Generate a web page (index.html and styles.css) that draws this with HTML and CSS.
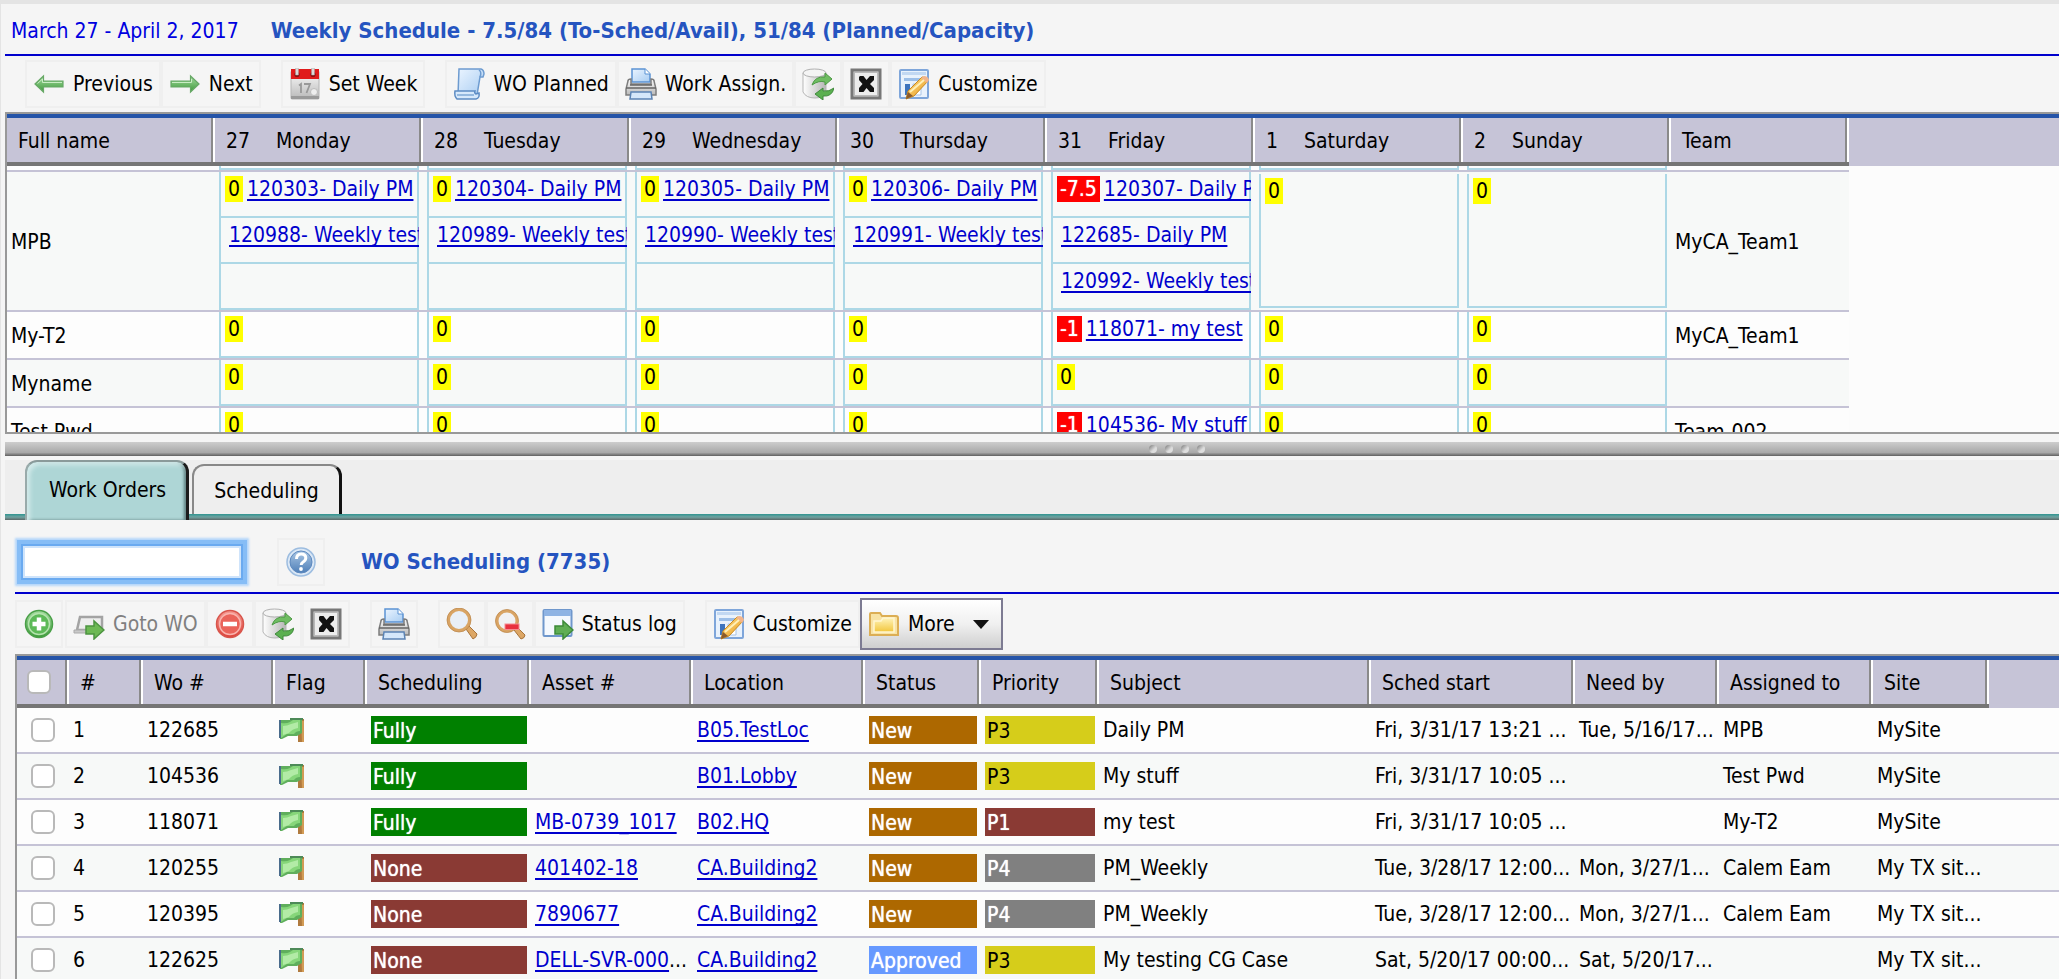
FILE: index.html
```html
<!DOCTYPE html>
<html lang="en">
<head>
<meta charset="utf-8">
<title>Weekly Schedule</title>
<link rel="stylesheet" href="styles.css">
</head>
<body>
<svg class="sprite" aria-hidden="true">
  <defs>
    <linearGradient id="gGreen" x1="0" y1="0" x2="0" y2="1"><stop offset="0" stop-color="#a5dba0"/><stop offset="1" stop-color="#3c9a3a"/></linearGradient>
    <linearGradient id="gBlue" x1="0" y1="0" x2="1" y2="1"><stop offset="0" stop-color="#eaf4ff"/><stop offset="1" stop-color="#a9cdf2"/></linearGradient>
    <linearGradient id="gGray" x1="0" y1="0" x2="0" y2="1"><stop offset="0" stop-color="#fafafa"/><stop offset="1" stop-color="#b9b9b9"/></linearGradient>
    <linearGradient id="gCyl" x1="0" y1="0" x2="1" y2="0"><stop offset="0" stop-color="#ffffff"/><stop offset="1" stop-color="#b5b5b5"/></linearGradient>
    <linearGradient id="gFold" x1="0" y1="0" x2="0" y2="1"><stop offset="0" stop-color="#fff3b8"/><stop offset="1" stop-color="#f2c63c"/></linearGradient>
    <linearGradient id="gHelp" x1="0" y1="0" x2="0" y2="1"><stop offset="0" stop-color="#a9c6e4"/><stop offset="1" stop-color="#4f7fb8"/></linearGradient>
    <linearGradient id="gRed" x1="0" y1="0" x2="0" y2="1"><stop offset="0" stop-color="#f59a92"/><stop offset="1" stop-color="#dc4038"/></linearGradient>
    <linearGradient id="gPencil" x1="0" y1="0" x2="1" y2="1"><stop offset="0" stop-color="#ffe08a"/><stop offset="1" stop-color="#e79a1c"/></linearGradient>
  </defs>
  <symbol id="i-prev" viewBox="0 0 32 32"><path d="M2 16 10.500 8v5H30v6H10.500v5z" fill="url(#gGreen)" stroke="#67a866" stroke-width="1.200"/><path d="M4.500 15.500 9.500 11v3.500H29" fill="none" stroke="#c9edc4" stroke-width="1"/></symbol>
  <symbol id="i-next" viewBox="0 0 32 32"><path d="M30 16 21.500 8v5H2v6h19.500v5z" fill="url(#gGreen)" stroke="#67a866" stroke-width="1.200"/><path d="M3 14.500h19.500V11" fill="none" stroke="#c9edc4" stroke-width="1"/></symbol>
  <symbol id="i-cal" viewBox="0 0 32 32"><rect x="2" y="3" width="28" height="28" rx="1" fill="url(#gGray)" stroke="#b5b5b5"/><rect x="2" y="1" width="28" height="10" fill="#e01b1b"/><path d="M2 28h28v3H2z" fill="#9a9a9a"/><circle cx="8" cy="6.500" r="2.600" fill="#8b1010"/><circle cx="24" cy="6.500" r="2.600" fill="#8b1010"/><path d="M6.600 0h2.800v7H6.600zM22.600 0h2.800v7h-2.800z" fill="#ddd" stroke="#aaa" stroke-width=".5"/><path d="M10 17.500l2-1.500v9M15 16h6l-3.500 9" fill="none" stroke="#999" stroke-width="1.800"/><circle cx="25" cy="24" r="3.500" fill="#eee" stroke="#bbb"/></symbol>
  <symbol id="i-scroll" viewBox="0 0 32 32"><path d="M6 1h22q3 1 3 5l-1 3h-3l-3 18H5z" fill="url(#gBlue)" stroke="#6d9bd0" stroke-width="1.500"/><path d="M26 2q3 2 1 7" fill="none" stroke="#6d9bd0" stroke-width="1.500"/><path d="M2 23h20q-1 2 1 3l3-1q1 5-3 6H4q-3-3-2-8z" fill="#d7e9fb" stroke="#5d8cc4" stroke-width="1.500"/><path d="M4 27h17" stroke="#7fa9d6" stroke-width="1.500"/></symbol>
  <symbol id="i-print" viewBox="0 0 32 32"><path d="M7 14V1h13l5 5v8z" fill="url(#gBlue)" stroke="#5b93d4" stroke-width="1.500"/><path d="M20 1v5h5" fill="#fff" stroke="#5b93d4"/><path d="M3 13q0-2 3-2v5h20v-5q3 0 3 2l2 8v6H1v-6z" fill="url(#gGray)" stroke="#7d7d7d" stroke-width="1.500"/><path d="M1 20h30M5 17h22" stroke="#666" stroke-width="1.500"/><path d="M6 24h20l1 7H5z" fill="#d5e7fa" stroke="#5b83b4" stroke-width="1.500"/></symbol>
  <symbol id="i-refresh" viewBox="0 0 32 32"><path d="M1 5v19q3 6 12 6 8 0 11-5V5z" fill="url(#gCyl)" stroke="#b5b5b5"/><ellipse cx="12.500" cy="5" rx="11.500" ry="4" fill="#f4f4f4" stroke="#b0b0b0"/><path d="M10 17q3-9 13-8V5l7 6-7 6v-3q-6-2-13 3z" fill="#6fbd62" stroke="#4d9a45"/><path d="M32 20q-2 9-11 8v4l-8-6 8-6v3q6 1 11-3z" fill="#5bb050" stroke="#3f8a3c"/></symbol>
  <symbol id="i-close" viewBox="0 0 32 32"><rect x="2" y="2" width="28" height="28" fill="#d9d9d9" stroke="#777" stroke-width="3"/><rect x="4.500" y="4.500" width="23" height="23" fill="#ececec" stroke="#b9b9b9"/><path d="M10 8h3.500l3 4 3.500-4H24v4l-4 4 4 4v4h-4l-3.500-4-3 4H9v-4l3.500-4L9 12V9z" fill="#111"/></symbol>
  <symbol id="i-custom" viewBox="0 0 32 32"><rect x="2" y="2" width="28" height="28" rx="1" fill="#e9f2fc" stroke="#7fa6da" stroke-width="2"/><path d="M4 4h24v3H4z" fill="#c2d8f2"/><path d="M6 10h20v3H6z" fill="#9dbfe8"/><path d="M7 16h5v11H7z" fill="#3e74bd"/><path d="M15 16h8v11h-8z" fill="#fff" stroke="#a9c4e6"/><path d="M8 31l2-8L24 9q3-1 6 4L16 28z" fill="url(#gPencil)" stroke="#c88a22"/><path d="M23 10l6 5 2-3q-1-4-5-4z" fill="#f2b58c"/><path d="M12 24 26 12" stroke="#fff0b8" stroke-width="2"/><path d="M8 31l2-7 5 4z" fill="#8a5a2c"/></symbol>
  <symbol id="i-help" viewBox="0 0 32 32"><circle cx="16" cy="16" r="14" fill="#dbe8f6" stroke="#9dbde0" stroke-width="1.500"/><circle cx="16" cy="16" r="11" fill="url(#gHelp)" stroke="#5d89bf"/><path d="M11.500 13q0-5 4.700-5 4.600 0 4.600 4 0 2.500-3 4.200-1.600 1-1.600 2.800" fill="none" stroke="#fff" stroke-width="3"/><circle cx="16" cy="23" r="1.900" fill="#fff"/></symbol>
  <symbol id="i-add" viewBox="0 0 32 32"><circle cx="16" cy="16" r="13.500" fill="url(#gGreen)" stroke="#4aa048" stroke-width="1.500"/><circle cx="16" cy="16" r="10.500" fill="#5dba58" stroke="#b4e3ad" stroke-width="1.500"/><path d="M16 9.500v13M9.500 16h13" stroke="#fff" stroke-width="4.500"/></symbol>
  <symbol id="i-goto" viewBox="0 0 32 32"><path d="M4 22 7 9h22v13z" fill="#eee" stroke="#a3a3a3" stroke-width="2.500"/><path d="M1 22h18v3H1z" fill="#c9c9c9" stroke="#aaa"/><path d="M13 18h8v-5l10 9-10 9v-5h-8z" fill="#6db954" stroke="#4c9440" stroke-width="1.500"/></symbol>
  <symbol id="i-del" viewBox="0 0 32 32"><circle cx="16" cy="16" r="13.500" fill="url(#gRed)" stroke="#d8554c" stroke-width="1.500"/><circle cx="16" cy="16" r="10.500" fill="#ea635a" stroke="#f9b3ad" stroke-width="1.500"/><path d="M9 16h14" stroke="#fff" stroke-width="4.500"/></symbol>
  <symbol id="i-zoom" viewBox="0 0 32 32"><path d="M20 21l3-3 8 8q0 3-4 5z" fill="#dda765" stroke="#a8743c"/><circle cx="13" cy="12" r="10.500" fill="#e9eff7" stroke="#d9a464" stroke-width="3"/><circle cx="13" cy="12" r="12" fill="none" stroke="#b98345" stroke-width=".7"/></symbol>
  <symbol id="i-zoomout" viewBox="0 0 32 32"><path d="M20 22l3-3 8 8q0 3-4 4z" fill="#dda765" stroke="#a8743c"/><circle cx="13" cy="13" r="10" fill="#f1f1f3" stroke="#d9a464" stroke-width="3"/><circle cx="13" cy="13" r="11.500" fill="none" stroke="#b98345" stroke-width=".7"/><rect x="11" y="16" width="14" height="5.500" fill="#e8313f" stroke="#f58a90"/></symbol>
  <symbol id="i-log" viewBox="0 0 32 32"><rect x="1.500" y="2" width="28" height="26" rx="1" fill="#f5f9fe" stroke="#6f97cc" stroke-width="2"/><path d="M2 2h27v6H2z" fill="#8fb4e4"/><path d="M13 18h8v-5l10 9-10 9v-5h-8z" fill="#5fae54" stroke="#3d8a3a" stroke-width="1.500"/></symbol>
  <symbol id="i-folder" viewBox="0 0 32 32"><path d="M2 27V6q0-1 1-1h9l2 3h14q2 0 2 2v17z" fill="#f8e3a4" stroke="#dcae54" stroke-width="2"/><path d="M6 24V13h7l2-3h11v14z" fill="url(#gFold)" stroke="#fff6cf" stroke-width="1.500"/></symbol>
  <symbol id="i-flag" viewBox="0 0 26 26"><path d="M19 2h6v23h-6z" fill="#b07a3e"/><path d="M22 4h3v21h-2z" fill="#d29b55"/><path d="M1 3h10V1h13l-1 3v12l-5 3h-9l-6 3H1z" fill="#5fae5c"/><path d="M2 6q5 1 9-1l3-2h7v11q-4 0-6 3H8l-6 4z" fill="#86d67a"/><path d="M4 9q4 0 8-2l7-2v6q-6 1-9 5l-6 2z" fill="#b2eba6"/><path d="M0 3h2v18H0z" fill="#4a6c8c"/><path d="M11 1h13v2H11z" fill="#4d8a58"/></symbol>
</svg>
<main class="page">
  <header class="titlebar">
    <span class="range">March 27 - April 2, 2017</span>
    <h1 class="title">Weekly Schedule - 7.5/84 (To-Sched/Avail), 51/84 (Planned/Capacity)</h1>
  </header>
  <div class="toolbar toolbar-week">
    <button class="btn"><svg class="icon"><use href="#i-prev"/></svg>Previous</button>
    <button class="btn btn-end"><svg class="icon"><use href="#i-next"/></svg>Next</button>
    <button class="btn btn-end"><svg class="icon"><use href="#i-cal"/></svg>Set Week</button>
    <button class="btn"><svg class="icon"><use href="#i-scroll"/></svg>WO Planned</button>
    <button class="btn"><svg class="icon"><use href="#i-print"/></svg>Work Assign.</button>
    <button class="btn" aria-label="Refresh"><svg class="icon"><use href="#i-refresh"/></svg></button>
    <button class="btn" aria-label="Close"><svg class="icon"><use href="#i-close"/></svg></button>
    <button class="btn"><svg class="icon"><use href="#i-custom"/></svg>Customize</button>
  </div>
  <div class="pane pane-week">
    <table class="grid week">
      <colgroup><col class="w208" span="8"><col class="w178"><col></colgroup>
      <thead><tr>
        <th>Full name</th>
        <th><span class="date">27</span>Monday</th>
        <th><span class="date">28</span>Tuesday</th>
        <th><span class="date">29</span>Wednesday</th>
        <th><span class="date">30</span>Thursday</th>
        <th><span class="date">31</span>Friday</th>
        <th><span class="date">1</span>Saturday</th>
        <th><span class="date">2</span>Sunday</th>
        <th>Team</th>
        <th class="fill"></th>
      </tr></thead>
      <tbody>
        <tr class="tail">
          <td></td>
          <td><div class="day"></div></td><td><div class="day"></div></td><td><div class="day"></div></td><td><div class="day"></div></td><td><div class="day"></div></td><td><div class="day"></div></td><td><div class="day"></div></td>
          <td></td><td class="fill"></td>
        </tr>
        <tr class="alt">
          <td class="name">MPB</td>
          <td><div class="day"><div class="slot"><span class="load">0</span><a href="#">120303- Daily PM</a></div><div class="slot more"><a href="#">120988- Weekly test</a></div><div class="slot"></div></div></td>
          <td><div class="day"><div class="slot"><span class="load">0</span><a href="#">120304- Daily PM</a></div><div class="slot more"><a href="#">120989- Weekly test</a></div><div class="slot"></div></div></td>
          <td><div class="day"><div class="slot"><span class="load">0</span><a href="#">120305- Daily PM</a></div><div class="slot more"><a href="#">120990- Weekly test</a></div><div class="slot"></div></div></td>
          <td><div class="day"><div class="slot"><span class="load">0</span><a href="#">120306- Daily PM</a></div><div class="slot more"><a href="#">120991- Weekly test</a></div><div class="slot"></div></div></td>
          <td><div class="day"><div class="slot"><span class="load over">-7.5</span><a href="#">120307- Daily PM</a></div><div class="slot more"><a href="#">122685- Daily PM</a></div><div class="slot more"><a href="#">120992- Weekly test</a></div></div></td>
          <td><div class="day"><div class="slot tall"><span class="load">0</span></div></div></td>
          <td><div class="day"><div class="slot tall"><span class="load">0</span></div></div></td>
          <td class="name">MyCA_Team1</td><td class="fill"></td>
        </tr>
        <tr>
          <td class="name">My-T2</td>
          <td><div class="day"><div class="slot"><span class="load">0</span></div></div></td>
          <td><div class="day"><div class="slot"><span class="load">0</span></div></div></td>
          <td><div class="day"><div class="slot"><span class="load">0</span></div></div></td>
          <td><div class="day"><div class="slot"><span class="load">0</span></div></div></td>
          <td><div class="day"><div class="slot"><span class="load over">-1</span><a href="#">118071- my test</a></div></div></td>
          <td><div class="day"><div class="slot"><span class="load">0</span></div></div></td>
          <td><div class="day"><div class="slot"><span class="load">0</span></div></div></td>
          <td class="name">MyCA_Team1</td><td class="fill"></td>
        </tr>
        <tr class="alt">
          <td class="name">Myname</td>
          <td><div class="day"><div class="slot"><span class="load">0</span></div></div></td>
          <td><div class="day"><div class="slot"><span class="load">0</span></div></div></td>
          <td><div class="day"><div class="slot"><span class="load">0</span></div></div></td>
          <td><div class="day"><div class="slot"><span class="load">0</span></div></div></td>
          <td><div class="day"><div class="slot"><span class="load">0</span></div></div></td>
          <td><div class="day"><div class="slot"><span class="load">0</span></div></div></td>
          <td><div class="day"><div class="slot"><span class="load">0</span></div></div></td>
          <td></td><td class="fill"></td>
        </tr>
        <tr>
          <td class="name">Test Pwd</td>
          <td><div class="day"><div class="slot"><span class="load">0</span></div></div></td>
          <td><div class="day"><div class="slot"><span class="load">0</span></div></div></td>
          <td><div class="day"><div class="slot"><span class="load">0</span></div></div></td>
          <td><div class="day"><div class="slot"><span class="load">0</span></div></div></td>
          <td><div class="day"><div class="slot"><span class="load over">-1</span><a href="#">104536- My stuff</a></div></div></td>
          <td><div class="day"><div class="slot"><span class="load">0</span></div></div></td>
          <td><div class="day"><div class="slot"><span class="load">0</span></div></div></td>
          <td class="name">Team-002</td><td class="fill"></td>
        </tr>
      </tbody>
    </table>
  </div>
  <div class="splitter"><i></i><i></i><i></i><i></i></div>
  <nav class="tabs">
    <button class="tab active">Work Orders</button>
    <button class="tab">Scheduling</button>
  </nav>
  <section class="orders">
    <div class="searchbar">
      <input class="search" type="text" aria-label="Search work orders">
      <button class="btn help" aria-label="Help"><svg class="icon"><use href="#i-help"/></svg></button>
      <h2 class="title">WO Scheduling (7735)</h2>
    </div>
    <div class="toolbar toolbar-orders">
      <button class="btn btn-add" aria-label="Add"><svg class="icon"><use href="#i-add"/></svg></button>
      <button class="btn muted"><svg class="icon"><use href="#i-goto"/></svg>Goto WO</button>
      <button class="btn" aria-label="Remove"><svg class="icon"><use href="#i-del"/></svg></button>
      <button class="btn" aria-label="Refresh"><svg class="icon"><use href="#i-refresh"/></svg></button>
      <button class="btn btn-end" aria-label="Close"><svg class="icon"><use href="#i-close"/></svg></button>
      <button class="btn btn-end" aria-label="Print"><svg class="icon"><use href="#i-print"/></svg></button>
      <button class="btn" aria-label="Search"><svg class="icon"><use href="#i-zoom"/></svg></button>
      <button class="btn" aria-label="Clear search"><svg class="icon"><use href="#i-zoomout"/></svg></button>
      <button class="btn btn-end"><svg class="icon"><use href="#i-log"/></svg>Status log</button>
      <button class="btn"><svg class="icon"><use href="#i-custom"/></svg>Customize</button>
      <button class="btn btn-more"><svg class="icon"><use href="#i-folder"/></svg>More<span class="caret"></span></button>
    </div>
    <div class="pane">
      <table class="grid list">
        <colgroup><col class="w52"><col class="w74"><col class="w132"><col class="w92"><col class="w164"><col class="w162"><col class="w172"><col class="w116"><col class="w118"><col class="w272"><col class="w204"><col class="w144"><col class="w154"><col class="w116"><col></colgroup>
        <thead><tr>
          <th class="pick"><input type="checkbox" aria-label="Select all"></th><th>#</th><th>Wo #</th><th>Flag</th><th>Scheduling</th><th>Asset #</th><th>Location</th><th>Status</th><th>Priority</th><th>Subject</th><th>Sched start</th><th>Need by</th><th>Assigned to</th><th>Site</th><th class="fill"></th>
        </tr></thead>
        <tbody>
          <tr><td class="pick"><input type="checkbox" aria-label="Select row 1"></td><td>1</td><td>122685</td><td><svg class="flag"><use href="#i-flag"/></svg></td><td><div class="chip green">Fully</div></td><td></td><td><a href="#">B05.TestLoc</a></td><td><div class="chip orange">New</div></td><td><div class="chip yellow">P3</div></td><td>Daily PM</td><td>Fri, 3/31/17 13:21 ...</td><td>Tue, 5/16/17...</td><td>MPB</td><td>MySite</td><td class="fill"></td></tr>
          <tr class="alt"><td class="pick"><input type="checkbox" aria-label="Select row 2"></td><td>2</td><td>104536</td><td><svg class="flag"><use href="#i-flag"/></svg></td><td><div class="chip green">Fully</div></td><td></td><td><a href="#">B01.Lobby</a></td><td><div class="chip orange">New</div></td><td><div class="chip yellow">P3</div></td><td>My stuff</td><td>Fri, 3/31/17 10:05 ...</td><td></td><td>Test Pwd</td><td>MySite</td><td class="fill"></td></tr>
          <tr><td class="pick"><input type="checkbox" aria-label="Select row 3"></td><td>3</td><td>118071</td><td><svg class="flag"><use href="#i-flag"/></svg></td><td><div class="chip green">Fully</div></td><td><a href="#">MB-0739_1017</a></td><td><a href="#">B02.HQ</a></td><td><div class="chip orange">New</div></td><td><div class="chip brown">P1</div></td><td>my test</td><td>Fri, 3/31/17 10:05 ...</td><td></td><td>My-T2</td><td>MySite</td><td class="fill"></td></tr>
          <tr class="alt"><td class="pick"><input type="checkbox" aria-label="Select row 4"></td><td>4</td><td>120255</td><td><svg class="flag"><use href="#i-flag"/></svg></td><td><div class="chip brown">None</div></td><td><a href="#">401402-18</a></td><td><a href="#">CA.Building2</a></td><td><div class="chip orange">New</div></td><td><div class="chip gray">P4</div></td><td>PM_Weekly</td><td>Tue, 3/28/17 12:00...</td><td>Mon, 3/27/1...</td><td>Calem Eam</td><td>My TX sit...</td><td class="fill"></td></tr>
          <tr><td class="pick"><input type="checkbox" aria-label="Select row 5"></td><td>5</td><td>120395</td><td><svg class="flag"><use href="#i-flag"/></svg></td><td><div class="chip brown">None</div></td><td><a href="#">7890677</a></td><td><a href="#">CA.Building2</a></td><td><div class="chip orange">New</div></td><td><div class="chip gray">P4</div></td><td>PM_Weekly</td><td>Tue, 3/28/17 12:00...</td><td>Mon, 3/27/1...</td><td>Calem Eam</td><td>My TX sit...</td><td class="fill"></td></tr>
          <tr class="alt"><td class="pick"><input type="checkbox" aria-label="Select row 6"></td><td>6</td><td>122625</td><td><svg class="flag"><use href="#i-flag"/></svg></td><td><div class="chip brown">None</div></td><td><a href="#">DELL-SVR-000</a>...</td><td><a href="#">CA.Building2</a></td><td><div class="chip blue">Approved</div></td><td><div class="chip yellow">P3</div></td><td>My testing CG Case</td><td>Sat, 5/20/17 00:00...</td><td>Sat, 5/20/17...</td><td></td><td>My TX sit...</td><td class="fill"></td></tr>
        </tbody>
      </table>
    </div>
  </section>
</main>
</body>
</html>
```
FILE: styles.css
```css
* { box-sizing: border-box; }

body {
  margin: 0;
  height: 100vh;
  overflow: hidden;
  background: #f5f5f5;
  color: #000;
  font: 21px/26px "DejaVu Sans Condensed", Tahoma, "DejaVu Sans", sans-serif;
}

button, input { font: inherit; color: inherit; }
a { color: #0000cd; text-decoration: underline 2px; text-underline-offset: 3px; text-decoration-skip-ink: none; }

/* Holds the icon symbols; kept rendered so that their gradients resolve */
.sprite { position: absolute; width: 0; height: 0; }

.page {
  height: 100%;
  overflow: hidden;
  border-top: 4px solid #e4e4e4;
  border-left: 1px solid #e4e4e4;
  padding-left: 4px;
}

.titlebar {
  display: flex;
  align-items: center;
  gap: 32px;
  height: 52px;
  padding: 3px 0 0 6px;
  border-bottom: 2px solid #0000cd;
  white-space: nowrap;
}
.range { color: #0000e0; }
.title { margin: 0; font-size: 22px; font-weight: bold; color: #2554c0; white-space: nowrap; }

/* Toolbars */
.toolbar { display: flex; align-items: center; }
.toolbar-week { padding: 4px 0 4px 20px; }
.toolbar-orders { padding: 4px 0; }
.btn {
  display: flex;
  align-items: center;
  gap: 8px;
  height: 48px;
  padding: 0 6px;
  border: 2px solid #efefef;
  background: #f5f5f5;
  white-space: nowrap;
}
.btn-end { margin-right: 20px; }
.btn-add { margin-right: 2px; }
.icon { width: 32px; height: 32px; flex: none; }
.muted { color: #808080; }
.btn-more {
  height: 52px;
  border-color: #7d7b92;
  padding: 0 12px 0 6px;
  background: linear-gradient(#fff, #f0f0f0 50%, #cfcfcf);
}
.caret { margin-left: 10px; border: 8px solid transparent; border-top: 9px solid #111; border-bottom: 0; }

/* Data grids */
.pane { overflow: hidden; border-top: 2px solid #999; border-left: 2px solid #999; background: #fcfcfc; }
.pane-week { height: 322px; border-bottom: 2px solid #999; }
.grid { width: 100%; table-layout: fixed; border-collapse: separate; border-spacing: 0; }
.grid th {
  height: 52px;
  padding: 2px 0 0 11px;
  border-top: 4px solid #2554a8;
  border-bottom: 4px solid #757575;
  background:
    linear-gradient(#fff, #fff) right 0 top / 2px 100% no-repeat,
    linear-gradient(#8a8a8a, #8a8a8a) right 2px top / 2px 100% no-repeat,
    #c6c4d7;
  font-weight: normal;
  text-align: left;
  white-space: nowrap;
}
.grid th.fill { border-bottom-color: #c6c4d7; background: #c6c4d7; }
.grid td {
  padding: 0 4px;
  border-bottom: 2px solid #c5c3d6;
  background: #fdfdfd;
  white-space: nowrap;
  overflow: hidden;
}
.grid .alt td { background: #f7f9f8; }
.grid td.name { padding-top: 2px; }
.week td.fill, .week .alt td.fill { border: 0; background: #fcfcfc; }
.date { margin-right: 26px; }

.w52 { width: 52px; }
.w74 { width: 74px; }
.w92 { width: 92px; }
.w116 { width: 116px; }
.w118 { width: 118px; }
.w132 { width: 132px; }
.w144 { width: 144px; }
.w154 { width: 154px; }
.w162 { width: 162px; }
.w164 { width: 164px; }
.w172 { width: 172px; }
.w178 { width: 178px; }
.w204 { width: 204px; }
.w208 { width: 208px; }
.w272 { width: 272px; }

.day { border: solid #add8e6; border-width: 0 2px; overflow: clip; overflow-clip-margin: 2px; }
.tail .day { height: 4px; border-bottom-width: 2px; }
.slot { display: flex; gap: 4px; height: 46px; padding: 4px 0 0 4px; border-bottom: 2px solid #add8e6; }
.slot.more { padding-left: 8px; }
.slot.tall { height: 134px; }
.load { flex: none; height: 26px; padding: 0 3px; background: #ff0; }
.load.over { background: #f00; color: #fff; text-shadow: 0 0 1px #fff; }

/* Splitter */
.splitter {
  display: flex;
  align-items: center;
  gap: 8px;
  height: 14px;
  margin-top: 8px;
  padding-left: calc(56% - 6px);
  background: linear-gradient(#cdcdcd, #a9a9a9 75%, #606060);
}
.splitter i { width: 8px; height: 8px; border-radius: 50%; background: linear-gradient(135deg, #777, #ddd 60%); }

/* Tabs */
.tabs {
  display: flex;
  align-items: flex-start;
  gap: 3px;
  margin-top: 4px;
  padding-left: 20px;
  background: linear-gradient(#2f9490, #6fa3a1 50%, #5c6868) bottom / 100% 6px no-repeat, #eee;
}
.tab {
  height: 50px;
  margin-top: 4px;
  padding: 2px 20px 0;
  border: 2px solid #888;
  border-right: 3px solid #111;
  border-bottom: 0;
  border-radius: 12px 12px 0 0;
  background: #eee;
}
.tab.active {
  height: 60px;
  margin: 0;
  padding: 0 20px 2px 22px;
  border-color: #8a9a9a #1c1c1c transparent #9aa;
  background: #aed6d6;
  box-shadow: inset 3px 3px 4px #d3eaea, inset -2px 0 3px #5c7c7c;
}

/* Work orders */
.orders { padding-left: 10px; }
.searchbar {
  display: flex;
  align-items: center;
  height: 74px;
  padding: 12px 0 0 6px;
  border-bottom: 2px solid #0000cd;
}
.search {
  width: 222px;
  height: 36px;
  border: 2px solid #6aaaf0;
  outline: none;
  box-shadow: 0 0 0 4px #86bdf6, 0 0 2px 6px #b4d6fa, inset 0 0 0 2px #cfe4fb;
  background: #fff;
}
.help { margin: 0 36px 0 34px; }

.list td { height: 46px; }
.list .pick input {
  appearance: none;
  display: block;
  width: 24px;
  height: 24px;
  margin: 0 0 0 10px;
  border: 2px solid #b9b9b9;
  border-radius: 6px;
  background: #fff;
}
.list th.pick { padding: 0; }
.flag { display: block; width: 26px; height: 26px; }
.chip { height: 28px; padding-left: 2px; line-height: 31px; color: #fff; text-shadow: 0 0 1px #fff; }
.green { background: #008000; }
.orange { background: #ad6800; }
.yellow { background: #d6cd1a; color: #000; text-shadow: none; }
.brown { background: #8a3a34; }
.gray { background: #808080; }
.blue { background: #6699ff; }
```
